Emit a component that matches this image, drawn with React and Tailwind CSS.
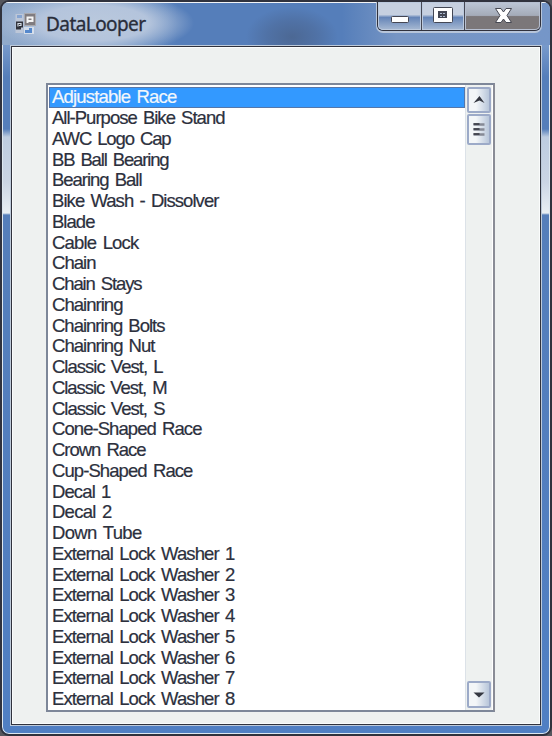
const items = [
  ["Adjustable Race", 124], ["All-Purpose Bike Stand", 172], ["AWC Logo Cap", 118],
  ["BB Ball Bearing", 116], ["Bearing Ball", 89], ["Bike Wash - Dissolver", 166],
  ["Blade", 42], ["Cable Lock", 86], ["Chain", 43], ["Chain Stays", 89],
  ["Chainring", 70], ["Chainring Bolts", 112], ["Chainring Nut", 102],
  ["Classic Vest, L", 110], ["Classic Vest, M", 114], ["Classic Vest, S", 112],
  ["Cone-Shaped Race", 149], ["Crown Race", 93], ["Cup-Shaped Race", 140],
  ["Decal 1", 58], ["Decal 2", 59], ["Down Tube", 89],
  ["External Lock Washer 1", 182], ["External Lock Washer 2", 182],
  ["External Lock Washer 3", 182], ["External Lock Washer 4", 182],
  ["External Lock Washer 5", 182], ["External Lock Washer 6", 182],
  ["External Lock Washer 7", 182], ["External Lock Washer 8", 182],
];

function fit(width) {
  return (el) => {
    if (!el) return;
    el.style.letterSpacing = "0px";
    const natural = el.getBoundingClientRect().width;
    el.style.letterSpacing = (width + 0.5 - natural) / el.textContent.length + "px";
  };
}

function Row({ label, width, selected }) {
  return (
    <li className={"flex h-[20.76px] shrink-0 items-center whitespace-pre pl-[3px] text-[18.5px] leading-[20px] [word-spacing:2px] [-webkit-text-stroke:0.2px] " +
      (selected ? "bg-[#3399ff] text-[#f3f7fb] outline-1 -outline-offset-1 outline-[#5577aa]" : "text-[#2c303d]")}>
      <span ref={fit(width)}>{label}</span>
    </li>
  );
}

function AppIcon() {
  return (
    <svg className="h-[22px] w-[22px]" viewBox="0 0 22 22">
      <rect x="0.5" y="1" width="8" height="19" fill="#bdc7d8" />
      <path d="M2 2h5v3H2z" fill="#86a4d1" />
      <rect x="9.5" y="0.5" width="11" height="12" fill="#807c80" stroke="#a9a9ae" />
      <path d="M12.500 10V4.500h5V8h-4" fill="none" stroke="#f5f5f5" strokeWidth="2" />
      <path d="M1 8.500h7v6H6v2H1z" fill="#30323b" />
      <path d="M3 13.500V10.500h3v2h-2" fill="none" stroke="#d5dce5" strokeWidth="1.200" />
      <rect x="9.500" y="14.500" width="9" height="6" fill="#d5deea" stroke="#d5deea" />
      <path d="M10 20v-3h4v-2h3v5z" fill="#5588cc" />
    </svg>
  );
}

function Caption() {
  return (
    <div className="absolute right-[9px] top-0 flex h-[29px] w-[164px] rounded-b-[6px] border-x border-b border-[#30313c] shadow-[0_1px_0_1px_#b7c5da]">
      <div className="flex w-[44px] rounded-bl-[5px] border-r border-[#454854] bg-linear-to-b from-[#c6d0e0] from-45% via-[#6585b7] via-55% to-[#a9bad3] shadow-[inset_0_0_0_1px_#bccade]">
        <svg className="h-[28px] w-[43px]" viewBox="0 0 43 28">
          <rect x="13.500" y="14.500" width="17" height="6" rx="1" fill="#fff" stroke="#454753" />
        </svg>
      </div>
      <div className="flex w-[43px] border-r border-[#454854] bg-linear-to-b from-[#c6d0e0] from-45% via-[#6585b7] via-55% to-[#a9bad3] shadow-[inset_0_0_0_1px_#bccade]">
        <svg className="h-[28px] w-[42px]" viewBox="0 0 42 28">
          <rect x="11.500" y="5.500" width="19" height="15" rx="1" fill="#fff" stroke="#434754" />
          <rect x="16.500" y="9.500" width="8" height="6" fill="#434754" stroke="#434754" />
          <path d="M18 11h2v1h-2zM21 11h2v1h-2zM18 14h2v1h-2zM21 14h2v1h-2z" fill="#aebcd2" />
        </svg>
      </div>
      <div className="flex flex-1 rounded-br-[5px] bg-linear-to-b from-[#bdc7d7] from-0% via-[#a4abb8] via-48% to-[#7b7779] to-52% shadow-[inset_0_0_0_1px_#b6bfd0]">
        <svg className="h-[28px] w-[74px]" viewBox="0 0 74 28">
          <path d="M30.500 6.500h5.500l2.500 3.500 2.500-3.500h5.500l-4.500 7 4.500 7H41l-2.500-3.500-2.500 3.500h-5.500l4.500-7z" fill="#fff" stroke="#464852" />
        </svg>
      </div>
    </div>
  );
}

function ScrollButton({ className, children }) {
  return (
    <div className={"w-[24px] shrink-0 rounded-[2px] border-2 border-[#9caac8] bg-linear-to-r from-[#f3f6f8] from-35% to-[#b8c6da] " + className}>
      <svg className="h-full w-full" viewBox="0 0 20 22">{children}</svg>
    </div>
  );
}

export default function App() {
  return (
    <div className="h-[736px] w-[552px] overflow-hidden bg-[#55565d] font-['Liberation_Sans',sans-serif]">
      <main className="relative flex h-[736px] w-[552px] flex-col overflow-hidden rounded-[9px] border-2 border-[#30323d] bg-[linear-gradient(180deg,#9cadc9_0px,#7799cb_44px,#557eba_75px,#557eba_127px,#bdcce0_135px,#cbd5e4_180px,#e9eff4_211px,#557eba_213px,#507fc3_100%)] shadow-[inset_0_0_0_1px_#dde7f0]">
        <header className="flex h-[43px] shrink-0 items-center border-t border-[#f2f4f7] bg-[radial-gradient(ellipse_100px_32px_at_92px_20px,#bac9dd_0%,#b4c4dc_55%,transparent_100%),radial-gradient(ellipse_46px_30px_at_290px_34px,#4c6894_0%,#5072a6_55%,transparent_100%),linear-gradient(90deg,#91aacb_0%,#779bc9_20%,#557eba_32%,#557eba_62%,#7695c4_72%,#7596c8_100%)] pl-[13px]">
          <AppIcon />
          <h1 className="ml-[9px] whitespace-nowrap font-['Noto_Sans',sans-serif] text-[19px] leading-6 text-[#292d3a] [-webkit-text-stroke:0.3px]">
            <span ref={fit(99)}>DataLooper</span>
          </h1>
        </header>
        <Caption />
        <section className="mx-[8px] mb-[8px] flex min-h-0 flex-1 border border-[#bdcada]">
          <div className="flex min-h-0 flex-1 border border-[#30323d] bg-[#eef1f0] pl-[34px] pr-[44px] pt-[36px] shadow-[inset_0_0_0_1px_#fafcfc]">
            <div className="flex h-[629px] w-[449px] shrink-0 border-2 border-[#7d8799] border-r-[#898c96] bg-white">
              <ul className="flex w-[417px] flex-col pl-[1px] pt-[2px]">
                {items.map(([label, width], i) => <Row key={label} label={label} width={width} selected={i === 0} />)}
              </ul>
              <div className="flex w-[28px] flex-col justify-between border-x border-l-[#dce2e8] border-r-white bg-[#eef1f0] pb-[2px] pl-px pt-[2px]">
                <div>
                  <ScrollButton className="h-[26px]"><path d="m4.500 14 6-7 5 7-5-2.500z" fill="#333640" /></ScrollButton>
                  <ScrollButton className="mt-px h-[31px]"><path d="M4.500 6h11M4.500 11h11M4.500 16h11" fill="none" stroke="#858995" strokeWidth="2.500" /><path d="M4.500 5.500h6M4.500 10.500h6M4.500 15.500h6" fill="none" stroke="#30323b" strokeWidth="1.500" /></ScrollButton>
                </div>
                <ScrollButton className="h-[27px]"><path d="M4.500 9h11l-5.500 5z" fill="#353842" /></ScrollButton>
              </div>
            </div>
          </div>
        </section>
      </main>
    </div>
  );
}
